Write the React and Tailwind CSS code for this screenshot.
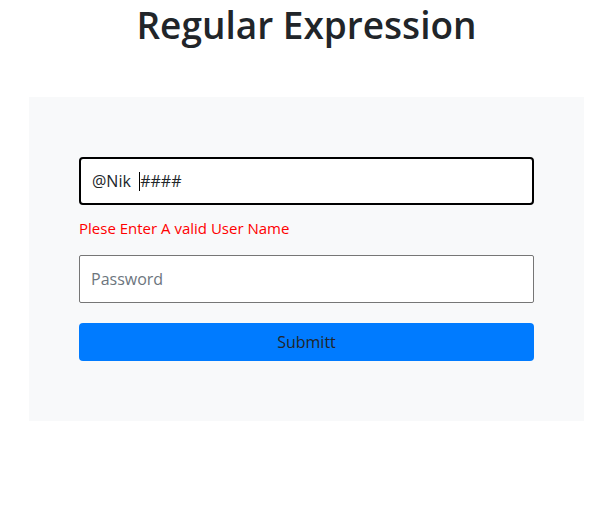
import React from "react";

export default function App() {
    return (
        <div className="min-h-[505px] bg-white font-['Open_Sans','Noto_Sans',sans-serif] text-[#212529]">
            <div className="ml-[29px] w-[555px]">
                <h1 className="pt-[1px] text-center text-[37px] font-semibold leading-[48px]">
                    Regular Expression
                </h1>
                <div className="mt-[48px] bg-[#f8f9fa] px-[50px] py-[60px]">
                    <div className="flex h-[48px] items-center rounded-[4px] border-2 border-black bg-white px-[11px] text-[16px]">
                        <span className="whitespace-pre">@Nik  </span>
                        <span className="h-[19px] w-px bg-black" />
                        <span>####</span>
                    </div>
                    <p className="mt-[12px] text-[15px] leading-[22px] text-[#ff0000]">
                        Plese Enter A valid User Name
                    </p>
                    <input
                        type="password"
                        placeholder="Password"
                        className="mt-[16px] block h-[48px] w-full rounded-[2px] border border-[#767676] bg-white px-[11px] text-[16px] placeholder:text-[#6c757d] focus:outline-none"
                    />
                    <button
                        type="button"
                        className="mt-[20px] block h-[38px] w-full rounded-[4px] bg-[#007bff] text-[16px] text-[#212529]"
                    >
                        Submitt
                    </button>
                </div>
            </div>
        </div>
    );
}
